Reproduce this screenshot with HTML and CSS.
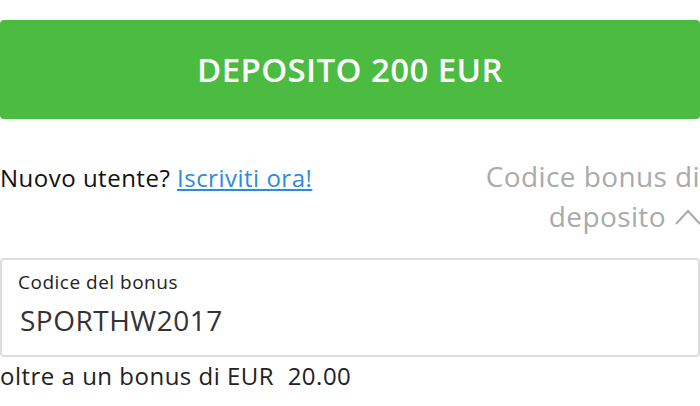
FILE: index.html
```html
<!DOCTYPE html>
<html>
<head>
<meta charset="UTF-8">
<title>Deposito</title>
<link rel="stylesheet" href="styles.css">
</head>
<body>
	<div class="depositPanel">
		<button class="depositButton">DEPOSITO 200 EUR</button>
		<div class="signupRow">
			<div class="newUser">Nuovo utente? <a href="#">Iscriviti ora!</a></div>
			<div class="bonusToggle">Codice bonus di deposito<svg class="chevron" width="28" height="18" viewBox="0 0 28 18"><path d="M2 16 L14 3 L26 16" fill="none" stroke="#aaa" stroke-width="2"/></svg></div>
		</div>
		<div class="bonusBox">
			<div class="bonusLabel">Codice del bonus</div>
			<div class="bonusValue">SPORTHW2017</div>
		</div>
		<div class="bonusNote">oltre a un bonus di EUR&nbsp; 20.00</div>
	</div>
</body>
</html>
```
FILE: styles.css
```css
body {
	margin: 0px;
	font-family: "Open Sans", "DejaVu Sans", sans-serif;
	background: #fff;
}

.depositPanel {
	padding-top: 20px;
}

.depositButton {
	display: block;
	width: 700px;
	height: 99px;
	padding: 0px;
	border: none;
	border-radius: 4px;
	background-color: #4bbb41;
	color: #fff;
	font-family: "Open Sans", sans-serif;
	font-size: 33px;
	font-weight: 600;
	letter-spacing: 0.4px;
}

.signupRow {
	display: flex;
	justify-content: space-between;
	align-items: flex-start;
	margin-top: 43px;
}

.newUser {
	font-size: 24px;
	line-height: 32px;
	letter-spacing: 0.5px;
	color: #111;
}

.newUser a {
	color: #2a8be0;
}

.bonusToggle {
	width: 230px;
	text-align: right;
	font-size: 28px;
	line-height: 40px;
	letter-spacing: 0.4px;
	color: #aaa;
	margin-top: -6px;
}

.chevron {
	margin-left: 8px;
	margin-right: -2px;
	vertical-align: 1px;
}

.bonusBox {
	margin-top: 22px;
	height: 99px;
	border: 2px solid #ddd;
	border-radius: 4px;
	box-sizing: border-box;
	padding: 10px 18px 0px 16px;
}

.bonusLabel {
	font-size: 19px;
	line-height: 24px;
	letter-spacing: 0.5px;
	color: #222;
}

.bonusValue {
	margin-top: 7px;
	font-size: 28px;
	line-height: 38px;
	letter-spacing: 0.5px;
	color: #333;
	padding-left: 2px;
}

.bonusNote {
	font-size: 24px;
	line-height: 38px;
	letter-spacing: 0.5px;
	color: #222;
}
```
